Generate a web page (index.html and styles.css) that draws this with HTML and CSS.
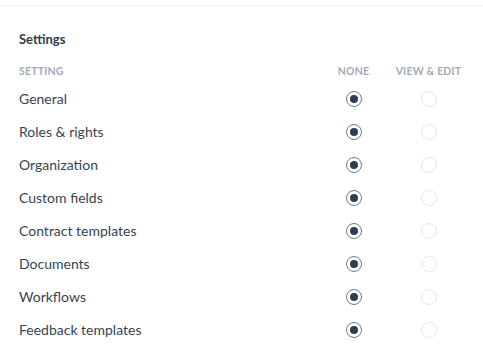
FILE: index.html
```html
<!DOCTYPE html>
<html lang="en">
<head>
    <meta charset="UTF-8">
    <title>Settings permissions</title>
    <link rel="stylesheet" href="styles.css">
</head>
<body>
    <div class="topbar"></div>
    <section class="panel">
        <h2>Settings</h2>
        <div class="table">
            <div class="row head">
                <span>Setting</span>
                <span class="col">None</span>
                <span class="col">View &amp; Edit</span>
            </div>
            <div class="row">
                <span>General</span>
                <span class="col"><span class="radio checked"></span></span>
                <span class="col"><span class="radio"></span></span>
            </div>
            <div class="row">
                <span>Roles &amp; rights</span>
                <span class="col"><span class="radio checked"></span></span>
                <span class="col"><span class="radio"></span></span>
            </div>
            <div class="row">
                <span>Organization</span>
                <span class="col"><span class="radio checked"></span></span>
                <span class="col"><span class="radio"></span></span>
            </div>
            <div class="row">
                <span>Custom fields</span>
                <span class="col"><span class="radio checked"></span></span>
                <span class="col"><span class="radio"></span></span>
            </div>
            <div class="row">
                <span>Contract templates</span>
                <span class="col"><span class="radio checked"></span></span>
                <span class="col"><span class="radio"></span></span>
            </div>
            <div class="row">
                <span>Documents</span>
                <span class="col"><span class="radio checked"></span></span>
                <span class="col"><span class="radio"></span></span>
            </div>
            <div class="row">
                <span>Workflows</span>
                <span class="col"><span class="radio checked"></span></span>
                <span class="col"><span class="radio"></span></span>
            </div>
            <div class="row">
                <span>Feedback templates</span>
                <span class="col"><span class="radio checked"></span></span>
                <span class="col"><span class="radio"></span></span>
            </div>
        </div>
    </section>
</body>
</html>
```

FILE: styles.css
```css
body {
    margin: 0;
    font-family: Lato, 'Open Sans', sans-serif;
    background-color: #fff;
    color: #3a4450;
}

.topbar {
    height: 5px;
    border-bottom: 1px solid #eef0f2;
}

.panel {
    padding: 0 17px 0 19px;
}

h2 {
    margin: 0;
    padding-top: 24px;
    height: 30px;
    font-size: 13px;
    font-weight: 700;
    color: #2e3d4f;
    line-height: 18px;
}

.row {
    display: grid;
    grid-template-columns: 1fr 75px 75px;
    align-items: center;
    height: 33px;
    font-size: 14px;
}

.row.head {
    height: 22px;
    font-size: 10.5px;
    font-weight: 700;
    text-transform: uppercase;
    letter-spacing: 0.2px;
    color: #a3acb6;
}

.col {
    display: flex;
    justify-content: center;
}

.radio {
    width: 14px;
    height: 14px;
    border: 1px solid #e4e7eb;
    border-radius: 50%;
    box-sizing: content-box;
    position: relative;
}

.radio.checked {
    border-color: #6f7c8a;
}

.radio.checked::after {
    content: "";
    position: absolute;
    top: 3px;
    left: 3px;
    width: 8px;
    height: 8px;
    border-radius: 50%;
    background-color: #2e3d4f;
}
```
